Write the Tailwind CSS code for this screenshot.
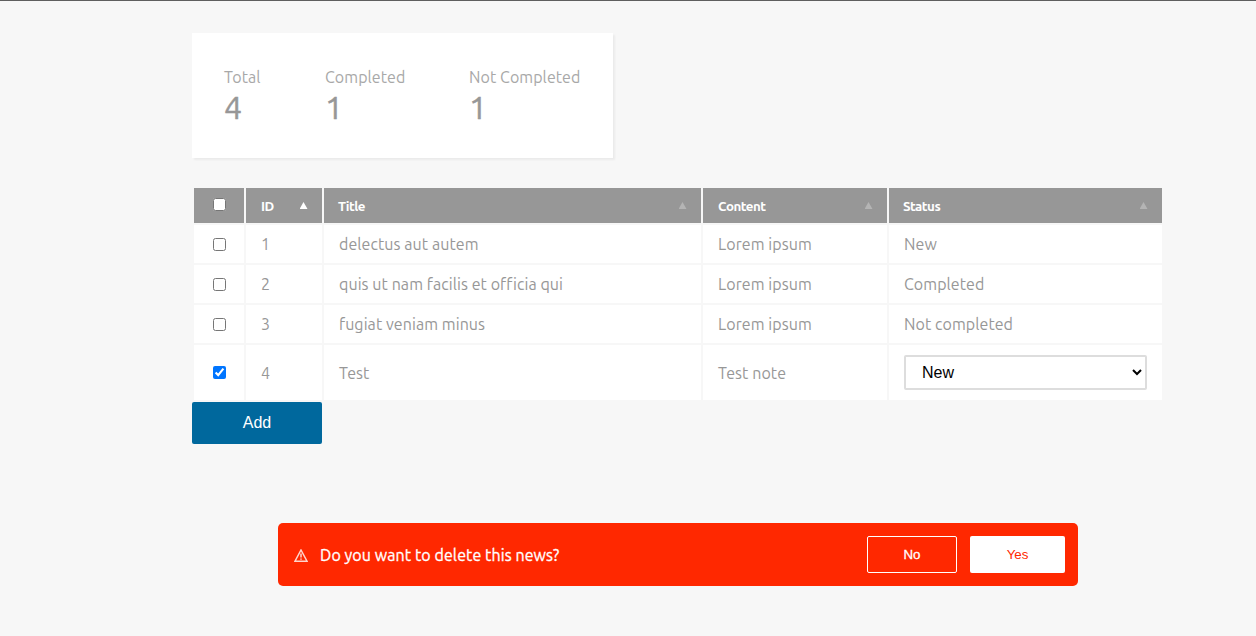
<!DOCTYPE html>
<html lang="en">
<head>
<meta charset="utf-8">
<title>News</title>
<script src="https://cdn.jsdelivr.net/npm/@tailwindcss/browser@4"></script>
</head>
<body class="h-[636px] overflow-hidden border-t border-[#5f5f5f] bg-[#f7f7f7] pt-8 font-['Ubuntu','Noto_Sans',sans-serif] text-base tracking-[0.07px] text-[#979797]">
<main class="ml-48 w-[972px]">
  <section class="flex h-[125px] w-[421px] gap-16 bg-white px-8 pt-8 text-[#a8a8a8] shadow-[2px_2px_2px_rgba(0,0,0,0.05)]">
    <div class="w-[37px] whitespace-nowrap"><div class="h-6 leading-6">Total</div><div class="h-[37px] text-[32px] leading-[36px] text-[#979797] [-webkit-text-stroke:0.5px_#979797]">4</div></div>
    <div class="w-20 whitespace-nowrap"><div class="h-6 leading-6">Completed</div><div class="h-[37px] text-[32px] leading-[36px] text-[#979797] [-webkit-text-stroke:0.5px_#979797]">1</div></div>
    <div class="whitespace-nowrap"><div class="h-6 leading-6">Not Completed</div><div class="h-[37px] text-[32px] leading-[36px] text-[#979797] [-webkit-text-stroke:0.5px_#979797]">1</div></div>
  </section>

  <section class="mt-7 grid grid-cols-[50px_76px_377px_184px_273px] grid-rows-[35px_38px_38px_38px_55px] gap-0.5 p-0.5 *:flex *:items-center *:bg-white *:px-[15px] *:whitespace-nowrap">
    <div class="justify-center bg-[#979797]! pb-0.5"><input type="checkbox" class="size-[13px]"></div>
    <div class="justify-between bg-[#979797]! pt-0.5 text-[13.33px] font-bold tracking-[-0.5px] text-white"><span>ID</span><svg class="-mt-px -mr-px size-2" viewBox="0 0 8 8" fill="#fff"><path d="M3.5 0 7.5 7H-.5Z"/></svg></div>
    <div class="justify-between bg-[#979797]! pt-0.5 text-[13.33px] font-bold tracking-[-0.5px] text-white"><span class="-ml-px">Title</span><svg class="-mt-px -mr-px size-2" viewBox="0 0 8 8" fill="#b4b4b4"><path d="M3.5 0 7.5 7H-.5Z"/></svg></div>
    <div class="justify-between bg-[#979797]! pt-0.5 text-[13.33px] font-bold tracking-[-0.5px] text-white"><span>Content</span><svg class="-mt-px -mr-px size-2" viewBox="0 0 8 8" fill="#b4b4b4"><path d="M3.5 0 7.5 7H-.5Z"/></svg></div>
    <div class="justify-between bg-[#979797]! pt-0.5 text-[13.33px] font-bold tracking-[-0.5px] text-white"><span class="-ml-px">Status</span><svg class="-mt-px -mr-px size-2" viewBox="0 0 8 8" fill="#b4b4b4"><path d="M3.5 0 7.5 7H-.5Z"/></svg></div>

    <div class="justify-center"><input type="checkbox" class="size-[13px]"></div><div>1</div><div>delectus aut autem</div><div>Lorem ipsum</div><div>New</div>
    <div class="justify-center"><input type="checkbox" class="size-[13px]"></div><div>2</div><div>quis ut nam facilis et officia qui</div><div>Lorem ipsum</div><div>Completed</div>
    <div class="justify-center"><input type="checkbox" class="size-[13px]"></div><div>3</div><div>fugiat veniam minus</div><div>Lorem ipsum</div><div>Not completed</div>
    <div class="justify-center"><input type="checkbox" checked class="size-[13px]"></div><div>4</div><div>Test</div><div>Test note</div>
    <div><select class="h-[35px] w-[243px] rounded-[2px] border-2 border-[#dddddd] bg-white pl-3 font-['Liberation_Sans',sans-serif] text-base tracking-normal text-black"><option>New</option></select></div>
  </section>

  <button class="block h-[42px] w-[130px] rounded-[2px] bg-[#00689d] font-['Liberation_Sans',sans-serif] text-base tracking-normal text-white">Add</button>
</main>

<aside class="mt-[79px] ml-[278px] flex h-[63px] w-[800px] items-center rounded-[5px] bg-[#ff2800] pr-[13px] pl-4 text-white">
  <svg class="mt-px mr-3 h-[13px] w-3.5" viewBox="0 0 14 13" fill="none" stroke="#ffd5cc" stroke-width="1.5"><path d="M7 1 13 12.2H1Z"/><path d="M7 4.5v4M7 9.5v1.3"/></svg>
  <span class="whitespace-nowrap tracking-[0.09px] [-webkit-text-stroke:0.3px_white]">Do you want to delete this news?</span>
  <button class="ml-auto h-[37px] w-[90px] rounded-[2px] border border-white font-['Liberation_Sans',sans-serif] text-[13.33px] tracking-normal [-webkit-text-stroke:0.3px_white]">No</button>
  <button class="ml-[13px] h-[37px] w-[95px] rounded-[2px] bg-white font-['Liberation_Sans',sans-serif] text-[13.33px] tracking-normal text-[#ff2800]">Yes</button>
</aside>
</body>
</html>
